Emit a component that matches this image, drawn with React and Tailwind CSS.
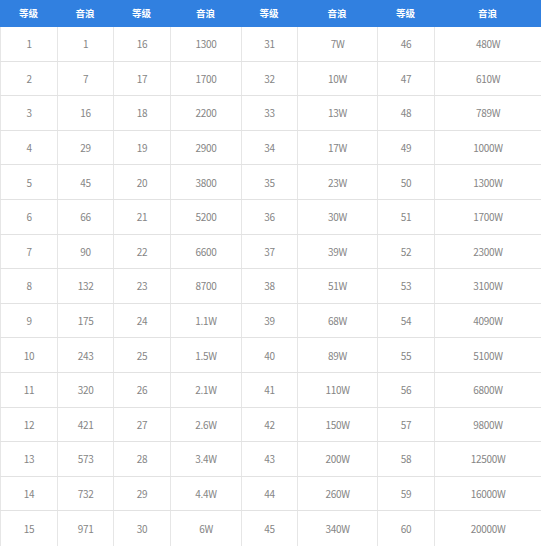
import React from "react";

// level / wave data, 4 groups of 15
const waves = [
  "1", "7", "16", "29", "45", "66", "90", "132", "175", "243", "320", "421", "573", "732", "971",
  "1300", "1700", "2200", "2900", "3800", "5200", "6600", "8700", "1.1W", "1.5W", "2.1W", "2.6W", "3.4W", "4.4W", "6W",
  "7W", "10W", "13W", "17W", "23W", "30W", "39W", "51W", "68W", "89W", "110W", "150W", "200W", "260W", "340W",
  "480W", "610W", "789W", "1000W", "1300W", "1700W", "2300W", "3100W", "4090W", "5100W", "6800W", "9800W", "12500W", "16000W", "20000W",
];

const cols = "grid grid-cols-[57px_56px_57px_71px_56px_80px_57px_1fr]";

const App = () => {
  return (
    <div className="w-[541px] h-[546px] bg-white overflow-hidden font-['Noto_Sans_CJK_SC','Noto_Sans',sans-serif]">
      {/* header */}
      <div className={`${cols} h-[27px] bg-[#3180e0] text-white text-[9.5px] font-bold`}>
        {[0, 1, 2, 3].map((g) => (
          <React.Fragment key={g}>
            <div className="flex items-center justify-center">等级</div>
            <div className="flex items-center justify-center">音浪</div>
          </React.Fragment>
        ))}
      </div>

      {/* rows */}
      {Array.from({ length: 15 }).map((_, r) => (
        <div
          key={r}
          className={`${cols} h-[34.6px] text-[10px] tracking-[-0.3px] text-[#858585] ${r < 14 ? "border-b border-[#e2e2e2]" : ""}`}
        >
          {[0, 1, 2, 3].map((g) => (
            <React.Fragment key={g}>
              <div className="flex items-center justify-center border-l border-[#e6e6e6]">
                {g * 15 + r + 1}
              </div>
              <div className="flex items-center justify-center border-l border-[#e6e6e6]">
                {waves[g * 15 + r]}
              </div>
            </React.Fragment>
          ))}
        </div>
      ))}
    </div>
  );
};

export default App;
